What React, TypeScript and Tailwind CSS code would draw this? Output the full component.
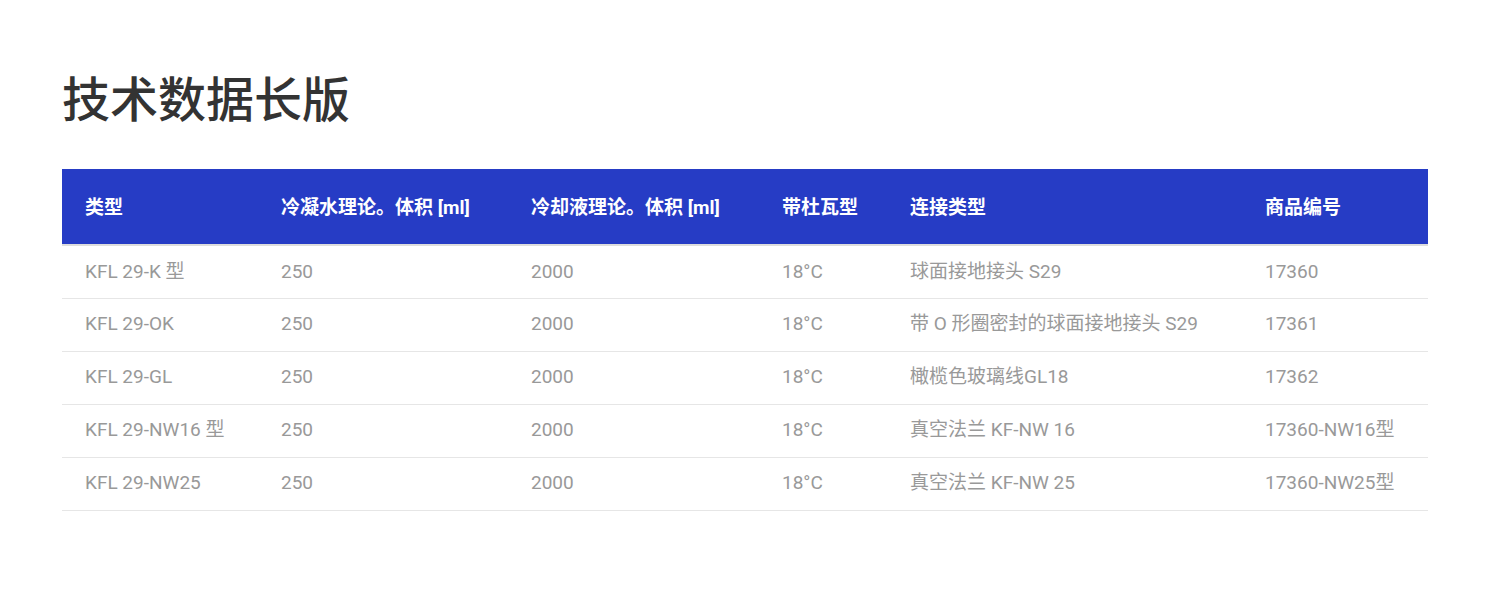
const headers = ["类型", "冷凝水理论。体积 [ml]", "冷却液理论。体积 [ml]", "带杜瓦型", "连接类型", "商品编号"];

const rows = [
  ["KFL 29-K 型", "250", "2000", "18°C", "球面接地接头 S29", "17360"],
  ["KFL 29-OK", "250", "2000", "18°C", "带 O 形圈密封的球面接地接头 S29", "17361"],
  ["KFL 29-GL", "250", "2000", "18°C", "橄榄色玻璃线GL18", "17362"],
  ["KFL 29-NW16 型", "250", "2000", "18°C", "真空法兰 KF-NW 16", "17360-NW16型"],
  ["KFL 29-NW25", "250", "2000", "18°C", "真空法兰 KF-NW 25", "17360-NW25型"],
];

const widths = ["w-[196px]", "w-[250px]", "w-[251px]", "w-[128px]", "w-[355px]", "w-[186px]"];

export default function App() {
  return (
    <div
      className="min-h-[601px] bg-white px-[62px] pt-[66px]"
      style={{ fontFamily: "Roboto, 'Noto Sans CJK SC', sans-serif" }}
    >
      <h1 className="text-[48px] leading-[70px] font-medium text-[#333333]">技术数据长版</h1>

      <table className="mt-[33px] w-[1366px] border-collapse">
        <thead>
          <tr className="h-[76px] bg-[#263cc5] border-b-2 border-[#dddddd]">
            {headers.map((h, i) => (
              <th key={i} className={`${widths[i]} pl-[23px] pt-[3px] text-left text-[19px] font-bold text-white`}>
                {h}
              </th>
            ))}
          </tr>
        </thead>
        <tbody>
          {rows.map((r, ri) => (
            <tr key={ri} className="h-[53px] border-b border-[#e6e6e6]">
              {r.map((c, ci) => (
                <td key={ci} className="pl-[23px] text-[19px] text-[#999999]">
                  {c}
                </td>
              ))}
            </tr>
          ))}
        </tbody>
      </table>
    </div>
  );
}
